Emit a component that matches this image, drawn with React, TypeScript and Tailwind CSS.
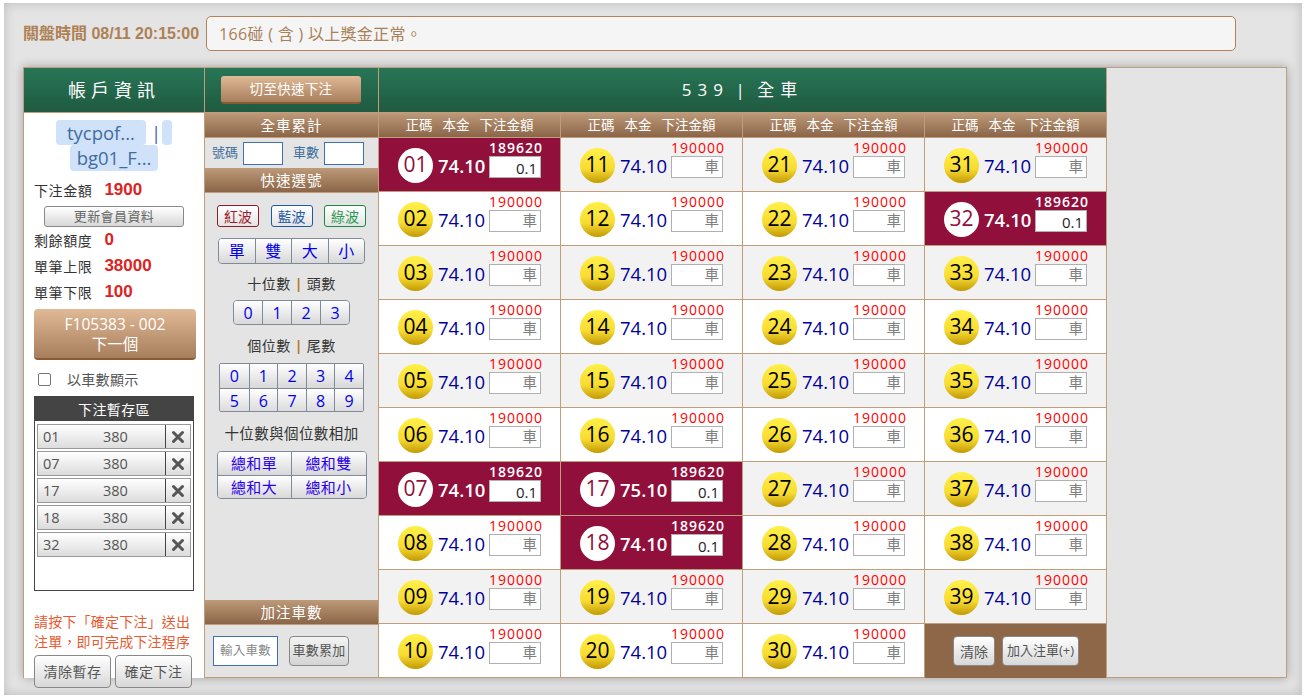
import React from 'react';
import { X } from 'lucide-react';

const cjk = { fontFamily: '"Open Sans", "Noto Sans CJK TC", sans-serif' };

// picked numbers, with their odds
const picked: Record<number, string> = { 1: '74.10', 7: '74.10', 17: '75.10', 18: '74.10', 32: '74.10' };
const tray = ['01', '07', '17', '18', '32'];

const pad = (n: number) => String(n).padStart(2, '0');

function SectionBar({ children }: { children: React.ReactNode }) {
  return (
    <div className="h-[25px] shrink-0 pt-[1px] flex items-center justify-center text-white text-[14.5px] tracking-[1px] bg-gradient-to-b from-[#bd9a7a] to-[#8b6547] border-b border-[#c09e7c]">
      {children}
    </div>
  );
}

function Cell({ n }: { n: number }) {
  const on = picked[n] !== undefined;
  const row = (n - 1) % 10;
  const bg = on ? 'bg-[#900f3b]' : row % 2 === 0 ? 'bg-[#f2f2f2]' : 'bg-white';
  return (
    <div className={`h-[54px] flex items-center justify-center gap-[5px] border-b border-r border-[#c09e7c] ${bg}`}>
      {on ? (
        <div className="w-[35px] h-[35px] mt-[1px] rounded-full bg-white text-[#900f3b] flex items-center justify-center text-[21px]">{pad(n)}</div>
      ) : (
        <div className="w-[35px] h-[35px] mt-[1px] rounded-full bg-gradient-to-b from-[#fff04a] via-[#f8dc30] via-60% to-[#c29a00] text-black flex items-center justify-center text-[21px]">{pad(n)}</div>
      )}
      <div className={`text-[18.5px] w-[46px] mt-[3px] whitespace-nowrap ${on ? 'text-white font-semibold' : 'text-[#000099]'}`}>{on ? picked[n] : '74.10'}</div>
      <div className="w-[52px] flex flex-col -mt-[12px]">
        <div className={`text-[14px] leading-[17px] tracking-[1px] text-center whitespace-nowrap ${on ? 'text-white font-semibold' : 'text-[#ff0000]'}`}>{on ? '189620' : '190000'}</div>
        {on ? (
          <div className="h-[22px] bg-white border border-[#b0b0b0] text-right pr-[3px] text-[15px] leading-[22px] text-[#222]">0.1</div>
        ) : (
          <div className="h-[22px] bg-white border border-[#b0b0b0] text-right pr-[3px] text-[14.5px] leading-[20px] text-[#808080]">車</div>
        )}
      </div>
    </div>
  );
}

function KeyRow({ keys, w, h = 26 }: { keys: string[]; w: string; h?: number }) {
  return (
    <div className={`flex mx-auto border border-[#7f8a9a] rounded-[4px] overflow-hidden ${w}`} style={{ height: h }}>
      {keys.map((k, i) => (
        <div key={k} className={`flex-1 flex items-center justify-center bg-gradient-to-b from-white to-[#d8d8d8] text-[#0000ee] text-[16px] ${i > 0 ? 'border-l border-[#7f8a9a]' : ''}`}>
          {k}
        </div>
      ))}
    </div>
  );
}

const amount = { fontFamily: '"Liberation Sans", sans-serif' };

export default function App() {
  return (
    <div className="h-[698px] w-[1306px] overflow-hidden bg-white pt-[3px] px-[4px]" style={cjk}>
      <div className="h-[692px] bg-[#e4e4e4] shadow-[inset_0_0_12px_rgba(0,0,0,0.18)] pl-[19px] pr-[15px] pt-[13px]">
        {/* top bar */}
        <div className="flex items-center h-[35px] w-[1213px] gap-[7px]">
          <div className="text-[16px] font-bold text-[#ae8155] whitespace-nowrap" style={{ fontFamily: '"Liberation Sans", "Noto Sans CJK TC", sans-serif' }}>關盤時間 08/11 20:15:00</div>
          <div className="flex-1 h-[35px] border border-[#b08358] rounded-[5px] bg-[#f5f5f5] pl-[12px] flex items-center text-[16px] text-[#a98058] tracking-[0.3px]">166碰 ( 含 ) 以上獎金正常。</div>
        </div>

        {/* main panel */}
        <div className="mt-[16px] h-[611px] border border-[#c09e7c] bg-[#e4e4e4] shadow-[0_0_10px_rgba(0,0,0,0.3)] flex">
          {/* account column */}
          <div className="w-[181px] shrink-0 border-r border-[#c09e7c] flex flex-col">
            <div className="h-[45px] shrink-0 flex items-center justify-center text-white text-[18px] tracking-[5px] bg-gradient-to-b from-[#287657] to-[#1f5a41] border-b border-[#c09e7c]">帳戶資訊</div>
            <div className="bg-white h-[565px] px-[10px]">
              <div className="text-center text-[18.5px] leading-[26px] text-[#3f6d9e] mt-[7px]">
                <span className="bg-[#d0e2fa] rounded-[4px] px-[11px]">tycpof...</span>
                <span className="ml-[5px]">|</span>
                <span className="bg-[#d0e2fa] rounded-[4px] pl-[10px] ml-[1px]"></span>
                <div className="-mt-[1px]"><span className="bg-[#d0e2fa] rounded-[4px] px-[1px] inline-block w-[88px]">bg01_F...</span></div>
              </div>
              <div className="flex items-center h-[26px] mt-[6px] text-[14px] text-[#333] tracking-[0.6px]">下注金額<span className="ml-[12px] text-[17px] font-bold text-[#dd2222] tracking-normal" style={amount}>1900</span></div>
              <div className="mx-auto mt-[3px] w-[140px] h-[21px] border border-[#888] rounded-[3px] bg-gradient-to-b from-white to-[#d8d8d8] flex items-center justify-center text-[13px] text-[#666] tracking-[0.4px]">更新會員資料</div>
              <div>
                {[['剩餘額度', '0'], ['單筆上限', '38000'], ['單筆下限', '100']].map(([a, b]) => (
                  <div key={a} className="flex items-center h-[26px] text-[14px] text-[#333] tracking-[0.6px]">{a}<span className="ml-[12px] text-[17px] font-bold text-[#dd2222] tracking-normal" style={amount}>{b}</span></div>
                ))}
              </div>
              <div className="mt-[4px] w-[162px] h-[51px] rounded-[4px] bg-gradient-to-b from-[#e0b996] to-[#a87f5d] border-b-2 border-[#8a5a34] text-white text-[15.5px] leading-[20px] flex flex-col items-center justify-center">
                <div>F105383 - 002</div>
                <div>下一個</div>
              </div>
              <div className="flex items-center mt-[9px] h-[20px] text-[14px] text-[#555]">
                <span className="ml-[4px] w-[13px] h-[13px] rounded-[2px] border border-[#767676] bg-white" />
                <span className="ml-[16px] tracking-[0.3px]">以車數顯示</span>
              </div>
              <div className="mt-[7px] w-[160px] border border-[#444]">
                <div className="h-[24px] bg-[#444] text-white text-[14px] flex items-center justify-center tracking-[0.4px]">下注暫存區</div>
                <div className="h-[169px] bg-white pt-[3px] px-[2px] flex flex-col gap-[2px]">
                  {tray.map(t => (
                    <div key={t} className="h-[25px] flex border border-[#999] bg-gradient-to-b from-white to-[#dcdcdc] text-[14.5px] text-[#555]">
                      <div className="w-[128px] border-r border-[#444] flex items-center pl-[5px]">
                        <span className="w-[60px]">{t}</span>
                        <span>380</span>
                      </div>
                      <div className="flex-1 flex items-center justify-center"><X size={18} strokeWidth={4} className="text-[#555]" /></div>
                    </div>
                  ))}
                </div>
              </div>
              <div className="mt-[21px] text-[14px] leading-[20px] text-[#e85a32] tracking-[0.2px] whitespace-nowrap">
                <div>請按下「確定下注」送出</div>
                <div>注單，即可完成下注程序</div>
              </div>
              <div className="flex gap-[4px] mt-[3px]">
                <div className="w-[77px] h-[33px] border border-[#888] rounded-[4px] bg-gradient-to-b from-white to-[#d8d8d8] flex items-center justify-center text-[14px] text-[#555] tracking-[0.5px]">清除暫存</div>
                <div className="w-[77px] h-[33px] border border-[#888] rounded-[4px] bg-gradient-to-b from-white to-[#d8d8d8] flex items-center justify-center text-[14px] text-[#555] tracking-[0.5px]">確定下注</div>
              </div>
            </div>
          </div>

          {/* quick pick column */}
          <div className="w-[174px] shrink-0 border-r border-[#c09e7c] flex flex-col">
            <div className="h-[45px] shrink-0 flex items-center pl-[16px] bg-gradient-to-b from-[#287657] to-[#1f5a41] border-b border-[#c09e7c]">
              <div className="w-[140px] h-[28px] rounded-[3px] bg-gradient-to-b from-[#e0b996] to-[#a87f5d] border-b-2 border-[#8a5a34] text-white text-[13.5px] flex items-center justify-center tracking-[0.3px]">切至快速下注</div>
            </div>
            <SectionBar>全車累計</SectionBar>
            <div className="h-[30px] shrink-0 flex items-center pl-[7px] text-[13px] text-[#3f6d9e]">
              號碼
              <span className="ml-[5px] w-[40px] h-[23px] bg-white border border-[#3f6fb5]" />
              <span className="ml-[10px]">車數</span>
              <span className="ml-[5px] w-[40px] h-[23px] bg-white border border-[#3f6fb5]" />
            </div>
            <SectionBar>快速選號</SectionBar>
            <div className="flex-1 flex flex-col">
              <div className="flex justify-between px-[12px] mt-[12px]">
                <div className="w-[42px] h-[22px] border border-[#8b1a2b] rounded-[3px] bg-gradient-to-b from-white to-[#e4e4e4] text-[#a01c2c] text-[14px] flex items-center justify-center">紅波</div>
                <div className="w-[42px] h-[22px] border border-[#1d5aa5] rounded-[3px] bg-gradient-to-b from-white to-[#e4e4e4] text-[#1d5aa5] text-[14px] flex items-center justify-center">藍波</div>
                <div className="w-[42px] h-[22px] border border-[#1b8a43] rounded-[3px] bg-gradient-to-b from-white to-[#e4e4e4] text-[#2a9a52] text-[14px] flex items-center justify-center">綠波</div>
              </div>
              <div className="mt-[11px]"><KeyRow keys={['單', '雙', '大', '小']} w="w-[147px]" /></div>
              <div className="mt-[7px] h-[24px] flex items-center justify-center text-[14px] text-[#333] tracking-[0.5px]">十位數<span className="mx-[4px] text-[#b5791e] font-bold">|</span>頭數</div>
              <div className="mt-[5px]"><KeyRow keys={['0', '1', '2', '3']} w="w-[117px]" h={25} /></div>
              <div className="mt-[8px] h-[24px] flex items-center justify-center text-[14px] text-[#333] tracking-[0.5px]">個位數<span className="mx-[4px] text-[#b5791e] font-bold">|</span>尾數</div>
              <div className="mt-[6px] w-[145px] mx-auto grid grid-cols-5 h-[49px] border border-[#7f8a9a] rounded-[2px] overflow-hidden">
                {['0', '1', '2', '3', '4', '5', '6', '7', '8', '9'].map((k, i) => (
                  <div key={k} className={`flex items-center justify-center bg-gradient-to-b from-white to-[#d8d8d8] text-[#0000ee] text-[16px] ${i % 5 > 0 ? 'border-l border-[#7f8a9a]' : ''} ${i > 4 ? 'border-t border-[#7f8a9a]' : ''}`}>{k}</div>
                ))}
              </div>
              <div className="mt-[10px] h-[24px] flex items-center justify-center text-[14.5px] text-[#333] tracking-[0.4px] whitespace-nowrap">十位數與個位數相加</div>
              <div className="mt-[5px] w-[150px] mx-auto grid grid-cols-[73px_1fr] h-[48px] border border-[#7f8a9a] rounded-[4px] overflow-hidden">
                {['總和單', '總和雙', '總和大', '總和小'].map((k, i) => (
                  <div key={k} className={`flex items-center justify-center bg-gradient-to-b from-white to-[#d8d8d8] text-[#2a00ee] text-[15px] tracking-[0.3px] ${i % 2 > 0 ? 'border-l border-[#7f8a9a]' : ''} ${i > 1 ? 'border-t border-[#7f8a9a]' : ''}`}>{k}</div>
                ))}
              </div>
            </div>
            <SectionBar>加注車數</SectionBar>
            <div className="h-[52px] shrink-0 flex items-center pl-[8px] gap-[11px]">
              <div className="w-[65px] h-[30px] bg-white border border-[#3f6fb5] flex items-center justify-center text-[12.5px] text-[#888] tracking-[0.3px]">輸入車數</div>
              <div className="w-[60px] h-[30px] border border-[#888] rounded-[4px] bg-gradient-to-b from-[#f4f4f4] to-[#d4d4d4] flex items-center justify-center text-[13px] text-[#555] tracking-[0.3px]">車數累加</div>
            </div>
          </div>

          {/* number grid */}
          <div className="w-[728px] shrink-0 flex flex-col">
            <div className="h-[45px] shrink-0 flex items-center justify-center text-white text-[17px] tracking-[6px] [word-spacing:-4px] bg-gradient-to-b from-[#287657] to-[#1f5a41] border-b border-r border-[#c09e7c] whitespace-pre">539 | 全車</div>
            <div className="grid grid-cols-4 h-[25px] shrink-0">
              {[0, 1, 2, 3].map(i => (
                <div key={i} className="flex items-center justify-center gap-[10px] text-white text-[13.5px] bg-gradient-to-b from-[#bd9a7a] to-[#8b6547] border-r border-b border-[#c09e7c]">
                  <span>正碼</span><span>本金</span><span>下注金額</span>
                </div>
              ))}
            </div>
            <div className="grid grid-cols-4 grid-rows-10 grid-flow-col">
              {Array.from({ length: 39 }, (_, i) => <Cell key={i} n={i + 1} />)}
              <div className="h-[54px] bg-[#8e6748] border-r border-[#c09e7c] flex items-center pl-[28px] gap-[7px]">
                <div className="w-[42px] h-[30px] border border-[#888] rounded-[4px] bg-gradient-to-b from-white to-[#d8d8d8] flex items-center justify-center text-[14px] text-[#555]">清除</div>
                <div className="w-[77px] h-[30px] border border-[#888] rounded-[4px] bg-gradient-to-b from-white to-[#d8d8d8] flex items-center justify-center text-[13px] text-[#555] whitespace-nowrap">加入注單(+)</div>
              </div>
            </div>
          </div>
        </div>
      </div>
    </div>
  );
}
